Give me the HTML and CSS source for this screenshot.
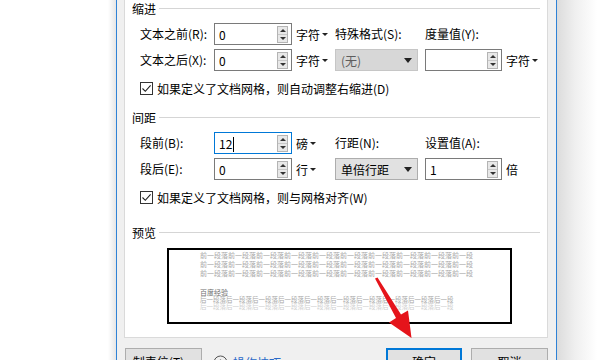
FILE: index.html
```html
<!DOCTYPE html>
<html lang="zh-CN">
<head>
    <meta charset="UTF-8">
    <title>段落</title>
    <link rel="stylesheet" href="styles.css">
</head>
<body>
    <div class="screen">
        <div class="side side-left"></div>

        <div class="dialog">
            <div class="page">
                <div class="group-title"><span>缩进</span><i></i></div>
                <div class="form-grid">
                    <label>文本之前(R):</label>
                    <div class="spinbox"><span>0</span><span class="spin"><b class="up"></b><b class="down"></b></span></div>
                    <div class="unit">字符<em></em></div>
                    <label>特殊格式(S):</label>
                    <label>度量值(Y):</label>
                    <div></div>

                    <label>文本之后(X):</label>
                    <div class="spinbox"><span>0</span><span class="spin"><b class="up"></b><b class="down"></b></span></div>
                    <div class="unit">字符<em></em></div>
                    <div class="select disabled"><span>(无)</span><em></em></div>
                    <div class="spinbox"><span></span><span class="spin"><b class="up"></b><b class="down"></b></span></div>
                    <div class="unit">字符<em></em></div>
                </div>
                <div class="check-row">
                    <span class="checkbox"><svg width="11" height="11" viewBox="0 0 11 11"><path d="M1.5 5.5 L4.3 8.3 L9.6 2.3" fill="none" stroke="#1f1f1f" stroke-width="1.1"/></svg></span>
                    <span>如果定义了文档网格，则自动调整右缩进(D)</span>
                </div>

                <div class="group-title gap-top"><span>间距</span><i></i></div>
                <div class="form-grid">
                    <label>段前(B):</label>
                    <div class="spinbox focused"><span>12<b class="caret"></b></span><span class="spin"><b class="up"></b><b class="down"></b></span></div>
                    <div class="unit">磅<em></em></div>
                    <label>行距(N):</label>
                    <label>设置值(A):</label>
                    <div></div>

                    <label>段后(E):</label>
                    <div class="spinbox"><span>0</span><span class="spin"><b class="up"></b><b class="down"></b></span></div>
                    <div class="unit">行<em></em></div>
                    <div class="select"><span>单倍行距</span><em></em></div>
                    <div class="spinbox"><span>1</span><span class="spin"><b class="up"></b><b class="down"></b></span></div>
                    <div class="unit">倍</div>
                </div>
                <div class="check-row">
                    <span class="checkbox"><svg width="11" height="11" viewBox="0 0 11 11"><path d="M1.5 5.5 L4.3 8.3 L9.6 2.3" fill="none" stroke="#1f1f1f" stroke-width="1.1"/></svg></span>
                    <span>如果定义了文档网格，则与网格对齐(W)</span>
                </div>

                <div class="group-title preview-title"><span>预览</span><i></i></div>
                <div class="preview">
                    <div class="pv-lines">
                        <p>前一段落前一段落前一段落前一段落前一段落前一段落前一段落前一段落前一段落前一段</p>
                        <p>前一段落前一段落前一段落前一段落前一段落前一段落前一段落前一段落前一段落前一段</p>
                        <p>前一段落前一段落前一段落前一段落前一段落前一段落前一段落前一段落前一段落前一段</p>
                    </div>
                    <p class="pv-body">百度经验</p>
                    <div class="pv-after">
                        <p>后一段落后一段落后一段落后一段落后一段落后一段落后一段落后一段落后一段落后一段</p>
                        <p class="faded">后一段落后一段落后一段落后一段落后一段落后一段落后一段落后一段落后一段落后一段</p>
                    </div>
                </div>
            </div>

            <div class="footer">
                <button class="btn">制表位(T)...</button>
                <a class="tips" href="#">
                    <svg width="15" height="15" viewBox="0 0 15 15"><circle cx="7.5" cy="7.5" r="6.5" fill="none" stroke="#555" stroke-width="1"/><path d="M7.5 4.5 V8.5" stroke="#555" stroke-width="1.2"/></svg>
                    <span>操作技巧</span>
                </a>
                <div class="spacer"></div>
                <button class="btn btn-default">确定</button>
                <button class="btn">取消</button>
            </div>
        </div>

        <div class="side side-right"></div>
    </div>

    <svg class="arrow" width="597" height="360" viewBox="0 0 597 360">
        <polygon points="375,278.5 377.5,277.5 401,314.5 408,310.5 411.5,338 389,322.5 396,318" fill="#e5141b"/>
    </svg>
</body>
</html>
```

FILE: styles.css
```css
body {
    margin: 0;
    width: 597px;
    height: 360px;
    overflow: hidden;
    position: relative;
    background-color: #ffffff;
    font-family: "Noto Sans CJK SC", "Noto Sans", sans-serif;
    font-size: 12px;
    color: #000;
}

.screen {
    display: flex;
    height: 360px;
}

.side-left {
    width: 116px;
    background: linear-gradient(to right, #ffffff 93%, #e6e6e6);
}

.side-right {
    flex: 1;
    background: linear-gradient(to right, #dcdcdc, #efefef 45%, #ffffff);
}

.dialog {
    width: 439px;
    border-left: 1px solid #2f82d6;
    border-right: 1px solid #2f82d6;
    background-color: #f0f0f0;
    display: flex;
    flex-direction: column;
}

.page {
    box-sizing: border-box;
    height: 338px;
    margin: 0 8px 0 7px;
    background-color: #ffffff;
    border: 1px solid #dadada;
    border-top: none;
}

.group-title {
    display: flex;
    align-items: center;
    height: 16px;
    padding: 0 7px 0 7px;
}

.group-title i {
    flex: 1;
    height: 1px;
    margin-left: 3px;
    background-color: #d5d5d5;
}

.gap-top {
    margin-top: 13px;
}

.preview-title {
    margin-top: 19px;
}

.form-grid {
    display: grid;
    grid-template-columns: 74px 78px 43px 90px 77px auto;
    grid-auto-rows: 22px;
    row-gap: 4px;
    margin-top: 7px;
    padding-left: 15px;
}

.form-grid label {
    line-height: 22px;
    white-space: nowrap;
}

.spinbox {
    box-sizing: border-box;
    height: 22px;
    border: 1px solid #7a7a7a;
    background-color: #fff;
    display: flex;
    align-items: center;
    justify-content: space-between;
    padding-left: 4px;
}

.spinbox.focused {
    border-color: #0078d7;
}

.caret {
    display: inline-block;
    width: 1px;
    height: 15px;
    background-color: #000;
    vertical-align: -3px;
    margin-left: 1px;
}

.spin {
    box-sizing: border-box;
    width: 11px;
    height: 17px;
    margin-right: 3px;
    border: 1px solid #b4b4b4;
    background-color: #e8e8e8;
    display: flex;
    flex-direction: column;
}

.spin b {
    flex: 1;
    display: flex;
    align-items: center;
    justify-content: center;
}

.spin b.up {
    border-bottom: 1px solid #c8c8c8;
}

.spin b.up::after,
.spin b.down::after {
    content: "";
    border-left: 3px solid transparent;
    border-right: 3px solid transparent;
}

.spin b.up::after {
    border-bottom: 3px solid #333;
}

.spin b.down::after {
    border-top: 3px solid #333;
}

.unit {
    display: flex;
    align-items: center;
    padding-left: 4px;
    white-space: nowrap;
}

.unit em,
.select em {
    display: inline-block;
    border-left: 3px solid transparent;
    border-right: 3px solid transparent;
    border-top: 3px solid #222;
    margin-left: 2px;
}

.select {
    box-sizing: border-box;
    width: 83px;
    height: 22px;
    border: 1px solid #adadad;
    background-color: #e1e1e1;
    display: flex;
    align-items: center;
    justify-content: space-between;
    padding: 0 4px 0 5px;
}

.select em {
    border-left-width: 4px;
    border-right-width: 4px;
    border-top-width: 5px;
    margin-right: 1px;
}

.select.disabled {
    background-color: #d7d7d7;
    border-color: #c6c6c6;
    color: #5d5d5d;
}

.check-row {
    display: flex;
    align-items: center;
    height: 16px;
    margin-top: 9px;
    padding-left: 15px;
}

.checkbox {
    box-sizing: border-box;
    width: 13px;
    height: 13px;
    border: 1px solid #333;
    margin-right: 4px;
    display: flex;
    align-items: center;
    justify-content: center;
}

.preview {
    box-sizing: border-box;
    width: 345px;
    height: 76px;
    margin: 8px 0 0 42px;
    border: 2px solid #000;
    padding: 0 0 0 31px;
}

.preview p {
    margin: 0;
    white-space: nowrap;
    font-size: 7px;
    line-height: 9px;
    color: #a8a8a8;
}

.pv-lines {
    padding-top: 1px;
}

.preview .pv-body {
    margin-top: 10px;
    line-height: 8px;
    color: #6f6f6f;
}

.preview .pv-after p {
    font-size: 6.5px;
    line-height: 7px;
}

.preview .pv-after p.faded {
    color: #cfcfcf;
}

.footer {
    display: flex;
    align-items: flex-start;
    padding: 10px 8px 0 8px;
    flex: 1;
    overflow: hidden;
}

.btn {
    box-sizing: border-box;
    width: 77px;
    height: 24px;
    border: 1px solid #adadad;
    background-color: #e1e1e1;
    font-family: "Noto Sans CJK SC", sans-serif;
    font-size: 12px;
    padding: 2px 0 0;
    color: #000;
    flex-shrink: 0;
}

.btn-default {
    width: 76px;
    border: 2px solid #0078d7;
    margin-right: 9px;
}

.tips {
    display: flex;
    align-items: center;
    margin: 6px 0 0 11px;
    color: #2a6ac8;
    text-decoration: none;
}

.tips span {
    margin-left: 5px;
}

.spacer {
    flex: 1;
}

.arrow {
    position: absolute;
    left: 0;
    top: 0;
    pointer-events: none;
}
```
